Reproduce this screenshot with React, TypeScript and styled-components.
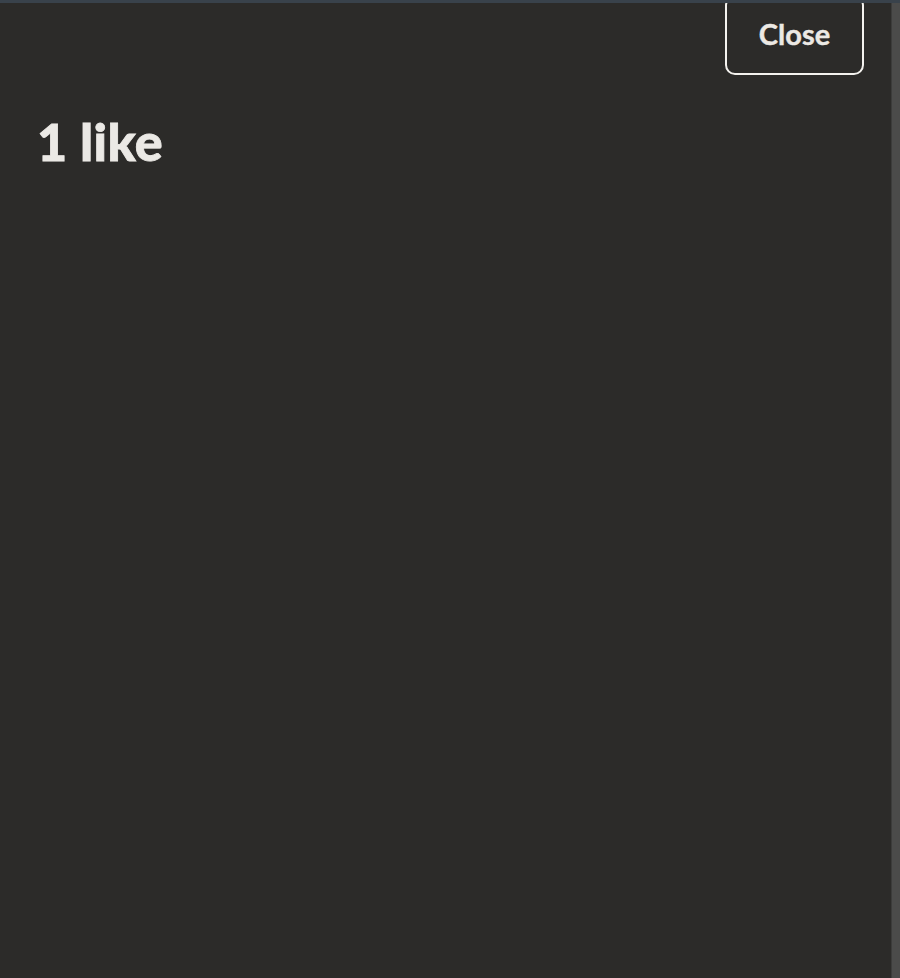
import React from "react";
import styled, { createGlobalStyle } from "styled-components";

const GlobalStyle = createGlobalStyle`
  html, body {
    margin: 0;
    padding: 0;
    background-color: #2c2b29;
    overflow: hidden;
  }
  * {
    box-sizing: border-box;
  }
`;

const Frame = styled.div`
  width: 900px;
  height: 978px;
  display: flex;
  flex-direction: column;
  background-color: #2c2b29;
  position: relative;
  overflow: hidden;
`;

const TopBar = styled.div`
  height: 3px;
  background-color: #39424b;
  position: relative;
  z-index: 2;
  flex-shrink: 0;
`;

const Body = styled.div`
  flex: 1;
  display: flex;
`;

const Panel = styled.div`
  flex: 1;
  display: flex;
  flex-direction: column;
  padding: 0 27px 0 37px;
`;

const ScrollTrack = styled.div`
  width: 9px;
  background-color: #4b4b4a;
  border-left: 1px solid #3c3c3b;
`;

const HeaderRow = styled.div`
  display: flex;
  justify-content: flex-end;
`;

const CloseBtn = styled.button`
  width: 139px;
  height: 80px;
  margin-top: -8px;
  background: transparent;
  border: 2px solid #f4f2ee;
  border-radius: 10px;
  color: #ece9e4;
  font-family: "Lato", "Open Sans", sans-serif;
  font-weight: 700;
  font-size: 29px;
  -webkit-text-stroke: 0.4px #ece9e4;
  padding: 0 0 4px;
  cursor: pointer;
`;

const Title = styled.h1`
  margin: 36px 0 0;
  font-family: "Lato", "Open Sans", sans-serif;
  font-weight: 900;
  font-size: 52px;
  line-height: 60px;
  color: #ebe9e5;
  letter-spacing: 0.3px;
  -webkit-text-stroke: 0.8px #ebe9e5;
`;

function App() {
  return (
    <>
      <GlobalStyle />
      <Frame>
        <TopBar />
        <Body>
          <Panel>
            <HeaderRow>
              <CloseBtn type="button">Close</CloseBtn>
            </HeaderRow>
            <Title>1 like</Title>
          </Panel>
          <ScrollTrack />
        </Body>
      </Frame>
    </>
  );
}

export default App;
